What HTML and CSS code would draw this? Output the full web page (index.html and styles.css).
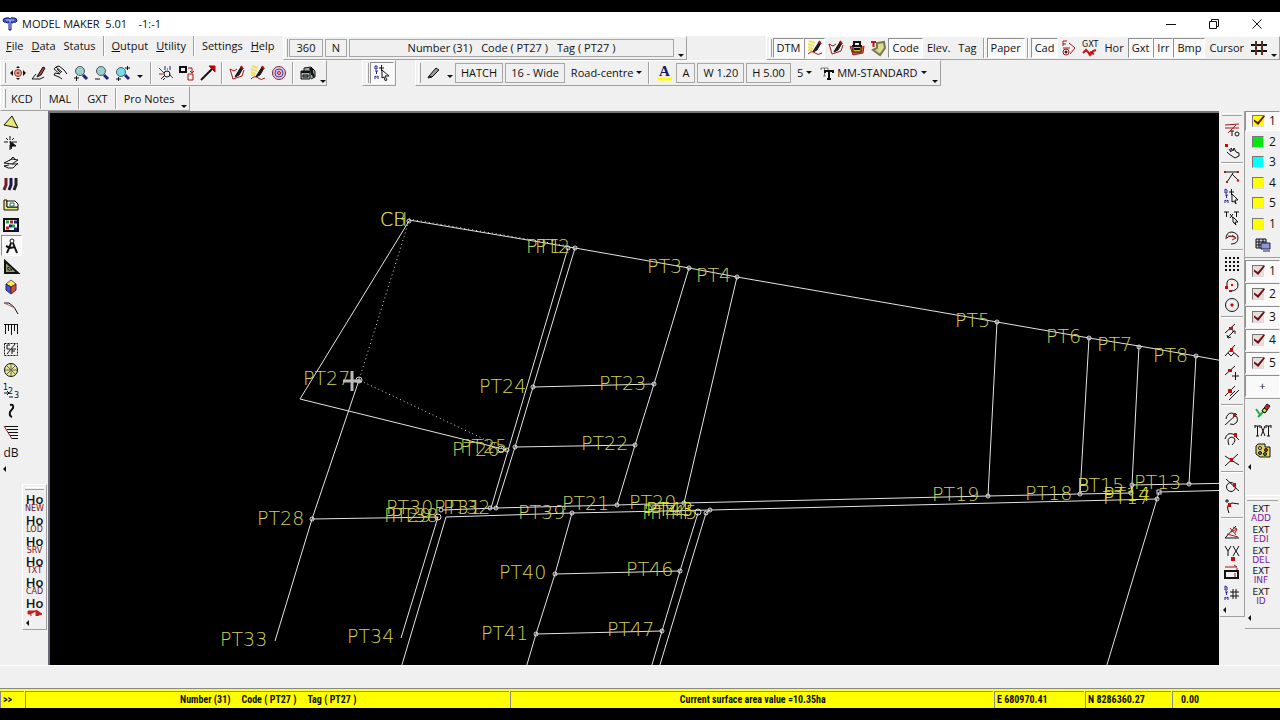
FILE: index.html
```html
<!DOCTYPE html>
<html lang="en">
<head>
<meta charset="utf-8">
<title>MODEL MAKER 5.01</title>
<link rel="stylesheet" href="styles.css">
</head>
<body>
<div class="app">
  <header class="titlebar">
    <svg class="logo" viewBox="0 0 16 16"><path d="M1 5Q1 2 4 2Q7 1 8 3Q9 1 12 2Q15 2 15 5Q14 7 12 6Q10 8 9 6V14H7V6Q5 8 4 6Q2 7 1 5Z" fill="#4a58c8" stroke="#101878"/><path d="M4 4H12M8 4V13" stroke="#a8c0ff"/></svg>
    <h1>MODEL MAKER&nbsp; 5.01 &nbsp;&nbsp; -1:-1</h1>
    <div class="winbtns">
      <button aria-label="Minimize"><svg viewBox="0 0 12 12"><path d="M1 6.500H11"/></svg></button>
      <button aria-label="Restore"><svg viewBox="0 0 12 12"><path d="M1.500 3.500H8.500V10.500H1.500ZM3.500 3V1.500H10.500V8.500H9"/></svg></button>
      <button aria-label="Close"><svg viewBox="0 0 12 12"><path d="M1.500 1.500L10.500 10.500M10.500 1.500L1.500 10.500"/></svg></button>
    </div>
  </header>

  <div class="row row1">
    <nav class="menu">
      <button><u>F</u>ile</button><button><u>D</u>ata</button><button>Status</button><i class="sep"></i>
      <button><u>O</u>utput</button><button><u>U</u>tility</button><i class="sep"></i>
      <button>Settings</button><button><u>H</u>elp</button>
    </nav>
    <div class="bar info">
      <i class="grip"></i>
      <button class="box w34">360</button><button class="box w22">N</button>
      <div class="box readout"><span>Number (31)</span><span>Code ( PT27 )</span><span>Tag ( PT27 )</span></div>
      <button class="more" aria-label="More"></button>
    </div>
    <div class="bar toggles">
      <i class="grip"></i>
      <button class="on">DTM</button>
      <button class="ic on" aria-label="Yellow pen"><svg viewBox="0 0 16 16"><path d="M2 1L8 3M1 4L7 6M1 7L6 9M1 10H5" stroke="#f0e060" stroke-width="2"/><path d="M1 14Q5 10 8 13T15 13" class="r"/><path d="M7 10L12 2L14 3L10 10L6 12Z" fill="#222"/><path d="M12 1L14 4" class="r2"/></svg></button>
      <button class="ic" aria-label="Red pen"><svg viewBox="0 0 16 16"><path d="M1 4L5 6L8 4M1 4L4 14L13 11L15 5" class="r"/><path d="M7 10L12 2L14 3L10 10L6 12Z" fill="#222"/><path d="M12 1L14 4" class="r2"/></svg></button>
      <button class="ic" aria-label="Survey layer"><svg viewBox="0 0 16 16"><path d="M1 6L4 15L14 13L15 6" fill="#d86040" class="r"/><path d="M4 6H12V12H4Z" fill="#d8b840"/><path d="M5 5V2H11V5M3 6H13M5 9H11" stroke-width="2"/></svg></button>
      <button class="ic" aria-label="Text area"><svg viewBox="0 0 16 16"><path d="M7 3L14 2L15 8L10 15L3 10L7 8Z" fill="#d8dc90" stroke="#777850" stroke-width="2"/><path d="M1 2H6M3.500 2V7" class="r2"/></svg></button>
      <button class="on">Code</button><button>Elev.</button><button>Tag</button><i class="sep"></i>
      <button class="on">Paper</button><i class="sep"></i>
      <button class="on">Cad</button>
      <button class="ic" aria-label="Snap"><svg viewBox="0 0 16 16"><path d="M2 1H6M2 1V6M2 4H5M8 3L14 8L9 14M2 8H9" class="r"/><circle cx="5" cy="12" r="3" class="r"/><circle cx="5" cy="12" r="1" fill="#700"/></svg></button>
      <button class="ic" aria-label="GXT"><svg viewBox="0 0 16 16"><text x="0" y="7" class="tiny">GXT</text><path d="M1 13L4 10L6 12L8 15L11 11L14 10M8 12L12 14" class="r2"/></svg></button>
      <button>Hor</button><button class="on">Gxt</button><button class="on">Irr</button><button class="on">Bmp</button><button>Cursor</button>
      <button class="ic" aria-label="Grid"><svg viewBox="0 0 16 16"><path d="M0 5H16M0 11H16" stroke-width="2"/><path d="M5 1V15M11 1V15" stroke="#5c3020" stroke-width="2"/></svg></button>
      <button class="more" aria-label="More"></button>
    </div>
  </div>

  <div class="row row2">
    <div class="bar tools">
      <i class="grip"></i>
      <button class="ic" aria-label="Fit"><svg viewBox="0 0 16 16"><circle cx="8" cy="8" r="3.500" fill="#e8b0a0" stroke="#902820"/><circle cx="8" cy="8" r="1" stroke="#902820"/><path d="M0 8L3 5V11ZM16 8L13 5V11ZM8 1L6 3H10ZM8 15L6 13H10Z" fill="#111" stroke="none"/></svg></button>
      <button class="ic" aria-label="Draw"><svg viewBox="0 0 16 16"><path d="M1 14H9L13 12M1 14L5 9"/><path d="M7 10L12 2L14 3L10 10L6 12Z" fill="#b04038"/></svg></button>
      <button class="ic" aria-label="Pan"><svg viewBox="0 0 16 16"><path d="M2 4L4 2L10 7M4 2L7 1L12 5L15 9M2 4L8 9L3 8L2 10L7 12L10 14M5 4L9 8"/></svg></button>
      <button class="ic" aria-label="Zoom in"><svg viewBox="0 0 16 16"><circle cx="7" cy="6" r="4.500" fill="#98d0d0" stroke="#555"/><path d="M10 10L14 14" stroke="#202080" stroke-width="3"/><path d="M1 13H6M3.500 11V16"/></svg></button>
      <button class="ic" aria-label="Zoom out"><svg viewBox="0 0 16 16"><circle cx="7" cy="6" r="4.500" fill="#98d0d0" stroke="#555"/><path d="M10 10L14 14" stroke="#202080" stroke-width="3"/><path d="M1 14H6"/></svg></button>
      <button class="ic" aria-label="Zoom window"><svg viewBox="0 0 16 16"><circle cx="6" cy="7" r="4.500" fill="#70e0e8" stroke="#555"/><path d="M10 10L14 14" stroke="#202080" stroke-width="3"/><path d="M1 14H6M3.500 12V16M10 3H15M12.500 1V5"/></svg></button>
      <button class="drop wide" aria-label="Zoom options"></button><i class="sep"></i>
      <button class="ic" aria-label="Zoom scale"><svg viewBox="0 0 16 16"><path d="M1 3L6 8M1 9H5M11 9L15 13" class="r"/><path d="M7 1V5M9 4H10M12 1V5" stroke="#202080"/><circle cx="9" cy="9" r="3"/><path d="M6 11L3 14M7 13L5 15"/></svg></button>
      <button class="ic" aria-label="Copy"><svg viewBox="0 0 16 16"><path d="M1 2H7V7H1Z" stroke-width="2"/><path d="M9 9H14V15H9ZM9 3H13V8M11 6L13 8L15 6" class="r"/></svg></button>
      <button class="ic" aria-label="Line"><svg viewBox="0 0 16 16"><path d="M1 15L12 4" stroke-width="2"/><path d="M9 1H15V7Z" fill="#b00" stroke="#b00"/></svg></button><i class="sep"></i>
      <button class="ic" aria-label="Red pen"><svg viewBox="0 0 16 16"><path d="M1 4L5 6L8 4M1 4L4 14L13 11L15 5" class="r"/><path d="M7 10L12 2L14 3L10 10L6 12Z" fill="#222"/><path d="M12 1L14 4" class="r2"/></svg></button>
      <button class="ic" aria-label="Yellow pen"><svg viewBox="0 0 16 16"><path d="M2 1L8 3M1 4L7 6M1 7L6 9M1 10H5" stroke="#f0e060" stroke-width="2"/><path d="M1 14Q5 10 8 13T15 13" class="r"/><path d="M7 10L12 2L14 3L10 10L6 12Z" fill="#222"/><path d="M12 1L14 4" class="r2"/></svg></button>
      <button class="ic" aria-label="Target"><svg viewBox="0 0 16 16"><circle cx="8" cy="8" r="6.500" fill="#e8c8e0" stroke="#702848"/><circle cx="8" cy="8" r="4" stroke="#3838a0"/><circle cx="8" cy="8" r="1.500" class="r"/></svg></button><i class="sep"></i>
      <button class="ic" aria-label="Camera"><svg viewBox="0 0 16 16"><path d="M1 6H10V14H1ZM4 6V3L11 2L15 6V12L11 14" fill="#aaa"/><path d="M1 7H10M10 3L14 12M12 3V10" stroke-width="2"/><path d="M3 10H8V12H3Z" fill="#6ab"/></svg></button>
      <button class="more" aria-label="More"></button>
    </div>
    <div class="bar dtm">
      <i class="grip"></i>
      <button class="ic on" aria-label="DTM select"><svg viewBox="0 0 16 16"><path d="M1 1V4H3V1ZM1 6H4M2.500 6V9M1 14V11L2.500 12L4 11V14" stroke="#2020a0"/><path d="M5 3H10M7.500 0V6M8 5L15 11H11L13 15L11 15.500L10 12L8 13Z" fill="#fff"/></svg></button>
    </div>
    <div class="bar style">
      <i class="grip"></i>
      <button class="ic w34" aria-label="Pen"><svg viewBox="0 0 16 16"><path d="M3 11L10 3L13 5L6 12ZM3 11L2 13L6 12" fill="#999"/></svg></button>
      <button class="drop" aria-label="Pen options"></button>
      <button class="box">HATCH</button><button class="box">16 - Wide</button>
      <button class="dd">Road-centre<b class="drop"></b></button><i class="sep"></i>
      <button class="ic w34" aria-label="Text colour"><svg viewBox="0 0 16 16"><path d="M1 14H15" stroke="#ff0" stroke-width="3"/><text x="2" y="11" class="serif">A</text></svg></button>
      <button class="box">A</button><button class="box">W 1.20</button><button class="box">H 5.00</button>
      <button class="dd">5<b class="drop"></b></button>
      <button class="dd"><svg viewBox="0 0 16 16"><path d="M2 5V3H9V5M5.500 3V11M4 11H7" stroke="#777"/><path d="M6 8V6H14V8M10 6V14M8 14H12" stroke-width="2"/></svg>MM-STANDARD<b class="drop"></b></button>
      <button class="more" aria-label="More"></button>
    </div>
  </div>

  <div class="row row3">
    <div class="bar notes"><i class="grip"></i><button>KCD</button><i class="sep"></i><button>MAL</button><i class="sep"></i><button>GXT</button><i class="sep"></i><button>Pro Notes</button><button class="more" aria-label="More"></button></div>
  </div>

  <main class="work">
    <aside class="side left">
      <button class="ic" aria-label="Triangle"><svg viewBox="0 0 16 16"><path d="M9 2L15 14L1 11Z" fill="#e8e878"/></svg></button>
      <button class="ic" aria-label="Point"><svg viewBox="0 0 16 16"><path d="M7 1V5M7 10V15M1 7H5M9 7H14M3 3L5 5M11 3L9 5"/><path d="M7 6L13 11L9 11L8 14Z" fill="#111"/></svg></button>
      <button class="ic" aria-label="Surfaces"><svg viewBox="0 0 16 16"><path d="M1 8L9 4L15 5L9 9ZM1 11Q5 14 10 13L15 8M1 11L6 10M6 6L10 2L13 5M9 9L15 9"/></svg></button>
      <button class="ic" aria-label="Pens"><svg viewBox="0 0 16 16"><path d="M3 2V9L1 14" stroke="#702020" stroke-width="3"/><path d="M8 2V9L6 14" stroke="#181858" stroke-width="3"/><path d="M13 2V9L11 14" stroke="#222" stroke-width="3"/></svg></button>
      <button class="ic" aria-label="Sheet"><svg viewBox="0 0 16 16"><path d="M1 3V13H15V10H4V3Z" fill="#e8e878"/><path d="M4 4H12L15 7V10H4Z" fill="#fff"/><path d="M7 6H11V9H7Z" stroke="#187838"/></svg></button>
      <button class="ic" aria-label="Palette grid"><svg viewBox="0 0 16 16"><path d="M1 2H15V14H1Z" fill="#fff" stroke-width="2"/><path d="M3 5H6M9 9H12" stroke="#20a040" stroke-width="3"/><path d="M7 5H10M3 11H6" stroke="#b02020" stroke-width="3"/><path d="M11 5H14M6 9H9M11 12H14" stroke="#202080" stroke-width="3"/></svg></button>
      <button class="ic on" aria-label="Compass"><svg viewBox="0 0 16 16"><circle cx="9" cy="3" r="2"/><path d="M8 5L4 15M10 5L14 15M3 8L7 10L12 9" stroke-width="2"/></svg></button>
      <button class="ic" aria-label="Set square"><svg viewBox="0 0 16 16"><path d="M2 2V14H15Z" fill="#999970" stroke-width="2"/><path d="M5 8V11H9Z" fill="#eee"/></svg></button>
      <button class="ic" aria-label="Solid"><svg viewBox="0 0 16 16"><path d="M8 1L13 5L8 8L3 5Z" fill="#ffe840" stroke="#665"/><path d="M3 5L8 8V15L3 11Z" fill="#4050d0" stroke="#226"/><path d="M13 5L8 8V15L13 11Z" fill="#d05038" stroke="#622"/></svg></button>
      <button class="ic" aria-label="Curve"><svg viewBox="0 0 16 16"><path d="M1 3H6L11 7L15 14"/><path d="M1 3L12 8" stroke="#a66"/></svg></button>
      <button class="ic" aria-label="Profile"><svg viewBox="0 0 16 16"><path d="M1 3.500H15M2.500 3V13M5.500 3V10M8.500 3V14M11.500 3V10M14.500 3V13"/></svg></button>
      <button class="ic" aria-label="Cut and fill"><svg viewBox="0 0 16 16"><path d="M1.500 2.500H14.500V14.500H1.500Z" stroke-dasharray="2 1"/><path d="M12 3L4 13M7 4H4V8H7M13 8H9V13M9 10H12"/></svg></button>
      <button class="ic" aria-label="Wheel"><svg viewBox="0 0 16 16"><circle cx="8" cy="8" r="6.500" fill="#e8e898"/><path d="M8 2V14M2 8H14M4 4L12 12M12 4L4 12" stroke="#665"/></svg></button>
      <button class="ic" aria-label="Renumber"><svg viewBox="0 0 16 16"><text x="0" y="7" class="tiny">1</text><text x="5" y="11" class="tiny">2</text><text x="11" y="15" class="tiny">3</text><path d="M1 10H5M4 8L6 10L4 12M6 14H10"/></svg></button>
      <button class="ic" aria-label="Spline"><svg viewBox="0 0 16 16"><path d="M7 2Q11 1 10 5L7 9Q6 13 9 14" stroke-width="2"/></svg></button>
      <button class="ic" aria-label="Section"><svg viewBox="0 0 16 16"><path d="M2 2.500H15M4 5.500H15M5 8.500H15M7 11.500H15M9 14.500H15"/><path d="M1 2L9 15" class="r"/></svg></button>
      <button class="ic">dB</button>
      <button class="back" aria-label="More"></button>
    </aside>
    <aside class="hobar">
      <i class="hgrip"></i>
      <button>Ho<small>NEW</small></button><button>Ho<small>LOD</small></button><button>Ho<small>SRV</small></button><button>Ho<small>TXT</small></button><button>Ho<small>CAD</small></button>
      <button aria-label="Ho exchange">Ho<svg viewBox="0 0 16 6"><path d="M4 4H1V1H10M4 4V6M9 0L15 4L9 6Z" fill="#b22" stroke="#b22"/></svg></button>
      <button class="back" aria-label="More"></button>
    </aside>

    <section class="canvas" aria-label="Drawing">
      <svg>
        <g transform="translate(-50 -113)">
          <g class="lines">
            <path d="M409 220L575 248L689 268L737 277L997 322L1089 338L1139 346L1196 356L1240 364"/>
            <path d="M409 221L300 399L507 450"/>
            <path d="M359 380L312 519L275 641"/>
            <path d="M568 248L491 508M575 248L533 387L515 447L496 508"/>
            <path d="M533 387L654 384M515 447L635 445"/>
            <path d="M689 268L654 384L635 445L617 505M737 277L684 503"/>
            <path d="M997 322L988 496M1089 338L1080 494M1139 346L1132 485L1131 493M1196 356L1189 484"/>
            <path d="M443 510L496 508L617 505L684 503L988 496L1080 494L1131 493M1132 485L1240 483"/>
            <path d="M312 519L438 517M446 517L572 513L710 510L1157 499L1159 492L1240 490"/>
            <path d="M438 517L401 638M446 517L401 668"/>
            <path d="M572 513L555 574L536 634L526 668M555 574L680 571M536 634L662 631"/>
            <path d="M698 513L680 571L662 631L651 668M710 510L706 513L659 668M1157 499L1106 668"/>
            <path d="M409 221L359 380L507 450M409 219L568 246" class="dots"/>
          </g>
          <g class="marks">
            <circle cx="409" cy="221" r="2"/><circle cx="568" cy="248" r="2"/><circle cx="575" cy="248" r="2"/><circle cx="689" cy="268" r="2"/><circle cx="737" cy="277" r="2"/><circle cx="997" cy="322" r="2"/><circle cx="1089" cy="338" r="2"/><circle cx="1139" cy="347" r="2"/><circle cx="1196" cy="356" r="2"/>
            <circle cx="533" cy="387" r="2"/><circle cx="654" cy="384" r="2"/><circle cx="515" cy="447" r="2"/><circle cx="635" cy="445" r="2"/><circle cx="507" cy="450" r="2"/><circle cx="501" cy="449" r="3"/><circle cx="359" cy="380" r="3"/><circle cx="359" cy="380" r="1"/>
            <circle cx="312" cy="519" r="2"/><circle cx="438" cy="517" r="3"/><circle cx="441" cy="510" r="2"/><circle cx="490" cy="508" r="2"/><circle cx="496" cy="508" r="2"/><circle cx="617" cy="505" r="2"/><circle cx="684" cy="503" r="2"/><circle cx="572" cy="513" r="2"/><circle cx="698" cy="512" r="3"/><circle cx="706" cy="513" r="2"/><circle cx="710" cy="510" r="2"/>
            <circle cx="555" cy="574" r="2"/><circle cx="680" cy="571" r="2"/><circle cx="536" cy="634" r="2"/><circle cx="662" cy="631" r="2"/>
            <circle cx="988" cy="496" r="2"/><circle cx="1080" cy="494" r="2"/><circle cx="1132" cy="485" r="2"/><circle cx="1131" cy="493" r="2"/><circle cx="1189" cy="484" r="2"/><circle cx="1157" cy="499" r="2"/><rect x="1157" y="490" width="4" height="4"/>
          </g>
          <g class="labels">
            <text x="380" y="226">CB</text><text x="380" y="226">CH</text><text x="526" y="253">PT1</text><text x="535" y="253">PT2</text>
            <text x="647" y="273">PT3</text><text x="696" y="282">PT4</text><text x="955" y="327">PT5</text><text x="1046" y="343">PT6</text><text x="1097" y="351">PT7</text><text x="1153" y="362">PT8</text>
            <text x="303" y="385">PT27</text><text x="479" y="393">PT24</text><text x="599" y="390">PT23</text><text x="581" y="450">PT22</text><text x="460" y="453">PT25</text><text x="452" y="456">PT26</text>
            <text x="257" y="525">PT28</text><text x="386" y="514">PT30</text><text x="384" y="522">PT29</text><text x="391" y="522">PT38</text><text x="434" y="514">PT31</text><text x="443" y="514">PT32</text>
            <text x="518" y="519">PT39</text><text x="562" y="510">PT21</text><text x="629" y="509">PT20</text><text x="642" y="519">PT44</text><text x="646" y="516" class="hot">PT43</text><text x="650" y="519">PT45</text>
            <text x="932" y="501">PT19</text><text x="1025" y="500">PT18</text><text x="1077" y="492">PT15</text><text x="1077" y="492">B</text><text x="1134" y="489">PT13</text><text x="1103" y="501" class="hot">PT14</text><text x="1103" y="504">PT17</text>
            <text x="499" y="579">PT40</text><text x="626" y="576">PT46</text><text x="481" y="640">PT41</text><text x="607" y="636">PT47</text><text x="220" y="646">PT33</text><text x="347" y="643">PT34</text>
          </g>
          <path class="cursor" d="M352 371V391M343 381H361"/>
        </g>
      </svg>
    </section>

    <aside class="side snaps">
      <i class="hgrip"></i>
      <button class="ic" aria-label="Snap to"><svg viewBox="0 0 16 16"><path d="M1 3L15 2M1 6H15M12 3L4 11" class="r"/><path d="M6 9H10M8 9V14"/><circle cx="13" cy="12" r="2"/></svg></button>
      <button class="ic" aria-label="Snap drag"><svg viewBox="0 0 16 16"><path d="M5 6L7 9L7 5L9 8L10 5L12 9L15 10V13L11 15L5 11L3 9"/><path d="M1 1H4V4H1Z" fill="#d00" stroke="none"/></svg></button>
      <i class="hsep"></i>
      <button class="ic" aria-label="End point"><svg viewBox="0 0 16 16"><path d="M1 4H14M9 5L3 14M8 6L14 12"/><path d="M1 3V5M14 3V5M3 13V15M13 12L15 13" class="r2"/></svg></button>
      <button class="ic" aria-label="DTM pick"><svg viewBox="0 0 16 16"><path d="M1 0V4H3V1ZM1 6H4M2.500 6V9M1 14V11L2.500 12L4 11V14" stroke="#2020a0"/><path d="M5 3H10M7.500 0V6M8 5L14 11H11L12 15L10 12L8 13Z" fill="#fff"/></svg></button>
      <button class="ic" aria-label="Text pick"><svg viewBox="0 0 16 16"><path d="M0 2H5M2.500 2V7M6 4L9 8M9 4L6 8M10 2H15M12.500 2V7M9 7L14 12H11L12 15L9 12Z"/></svg></button>
      <button class="ic" aria-label="Arc pick"><svg viewBox="0 0 16 16"><path d="M2 9Q2 2 8 2Q14 3 14 8Q14 14 7 14M3 8Q5 5 11 7"/><path d="M4 6L11 7M8 5L12 8L8 10" class="r"/></svg></button>
      <i class="hsep"></i>
      <button class="ic" aria-label="Grid snap"><svg viewBox="0 0 16 16"><path d="M1 2H15M1 6H15M1 10H15M1 14H15" stroke-width="2" stroke-dasharray="2 2"/></svg></button>
      <button class="ic" aria-label="Arc end"><svg viewBox="0 0 16 16"><path d="M3 9Q2 2 8 2Q14 3 14 8Q14 14 6 14"/><path d="M1 9H4V12H1ZM5 13H8V15H5ZM7 7H9V9H7Z" fill="#d00" stroke="none"/></svg></button>
      <button class="ic" aria-label="Centre"><svg viewBox="0 0 16 16"><circle cx="8" cy="8" r="6.500"/><path d="M7 7H9V9H7Z" fill="#d00" stroke="#d00"/></svg></button>
      <i class="hsep"></i>
      <button class="ic" aria-label="Along"><svg viewBox="0 0 16 16"><path d="M1 10L11 1M4 14L10 8M3 12L4 15L7 14M8 8H11V11"/><path d="M6 5H8V6H6Z" class="r2"/></svg></button>
      <button class="ic" aria-label="Mid point"><svg viewBox="0 0 16 16"><path d="M1 12L11 1M7 6L15 13M4 9L7 12L10 9"/><path d="M7 5H8V7H7Z" class="r2"/></svg></button>
      <button class="ic" aria-label="Add point"><svg viewBox="0 0 16 16"><path d="M1 11L11 2M8 12H15M11.500 8V16"/><path d="M5 6H7V7H5Z" class="r2"/></svg></button>
      <button class="ic" aria-label="Parallel"><svg viewBox="0 0 16 16"><path d="M1 11L11 1M5 15L15 5M6 11L11 6"/><path d="M5 5H7V7H5Z" class="r2"/></svg></button>
      <i class="hsep"></i>
      <button class="ic" aria-label="Tangent"><svg viewBox="0 0 16 16"><path d="M1 14L13 3M2 8Q3 2 8 2Q15 5 13 11Q10 15 6 13"/><path d="M10 3H11V5H10Z" class="r2"/></svg></button>
      <button class="ic" aria-label="Arc tangent"><svg viewBox="0 0 16 16"><path d="M1 8Q3 1 9 3L15 9M5 14Q2 7 8 6Q14 8 8 14"/><path d="M11 3H12V5H11Z" class="r2"/></svg></button>
      <button class="ic" aria-label="Intersection"><svg viewBox="0 0 16 16"><path d="M1 14L14 2M1 4L15 13"/><path d="M7 7H8V9H7Z" class="r2"/></svg></button>
      <i class="hsep"></i>
      <button class="ic" aria-label="Circle tangent"><svg viewBox="0 0 16 16"><circle cx="7" cy="9" r="4.500"/><path d="M2 1L15 13"/><path d="M10 6H11V8H10Z" class="r2"/></svg></button>
      <button class="ic" aria-label="Arc node"><svg viewBox="0 0 16 16"><path d="M5 15Q1 6 8 5L15 6M1 3H5M3 1V5"/><path d="M5 6H6V8H5Z" class="r2"/></svg></button>
      <i class="hsep"></i>
      <button class="ic" aria-label="Angle"><svg viewBox="0 0 16 16"><path d="M1 14H15M1 14L12 2"/><path d="M3 10L14 13M6 4L12 11M7 8L13 5M9 3L13 5L11 9" class="r"/></svg></button>
      <button class="ic" aria-label="Coordinates"><svg viewBox="0 0 16 16"><path d="M1 1L4 6L7 1M4 6V11M9 1L15 11M15 1L9 11"/><path d="M8 13H10V15H8Z" class="r2"/></svg></button>
      <button class="ic" aria-label="Offset"><svg viewBox="0 0 16 16"><path d="M1 6H14V13H1Z" stroke-width="2"/><path d="M1 2H13L10 0M13 3V5M11 12V8" class="r"/></svg></button>
      <button class="ic" aria-label="DTM grid"><svg viewBox="0 0 16 16"><path d="M1 0V4H3V1ZM1 6H4M2.500 6V9M1 14V11L2.500 12L4 11V14" stroke="#2020a0"/><path d="M6 6H15M6 10H15M9 3V13M12 3V13"/></svg></button>
      <button class="back" aria-label="More"></button>
    </aside>

    <aside class="layers">
      <div class="colours">
        <label class="on"><input type="checkbox" class="yellow" checked>1</label>
        <label><input type="checkbox" class="green">2</label>
        <label><input type="checkbox" class="cyan">3</label>
        <label><input type="checkbox" class="yellow">4</label>
        <label><input type="checkbox" class="yellow">5</label>
        <label><input type="checkbox" class="yellow">1</label>
        <button class="ic" aria-label="Layer manager"><svg viewBox="0 0 16 16"><path d="M1 2H11V11H1Z" fill="#ccd"/><path d="M1 5H11M1 8H11M4 2V11M8 2V11"/><path d="M6 6H15V12H6ZM8 14H15" fill="#89c" stroke="#202050"/></svg></button>
      </div>
      <div class="views">
        <label class="on"><input type="checkbox" checked>1</label>
        <label class="on"><input type="checkbox" checked>2</label>
        <label class="on"><input type="checkbox" checked>3</label>
        <label class="on"><input type="checkbox" checked>4</label>
        <label class="on"><input type="checkbox" checked>5</label>
        <button class="on">+</button>
      </div>
      <div class="edits">
        <button class="ic" aria-label="Erase"><svg viewBox="0 0 16 16"><path d="M1 7L6 14M3 15L9 9" stroke="#20b040" stroke-width="2"/><path d="M7 9L12 2L15 4L10 11Z" fill="#c03020"/><path d="M7 9L10 11L12 8L9 6Z" fill="#e8e040"/></svg></button>
        <button class="ic" aria-label="Text style"><svg viewBox="0 0 16 16"><path d="M0 3H5M2.500 3V13M1 13H4M6 3L10 13M10 3L6 13M11 3H16M13.500 3V13M12 13H15"/><path d="M0 2V5M5 2V5M11 2V5M16 2V5"/></svg></button>
        <button class="ic" aria-label="Palette"><svg viewBox="0 0 16 16"><path d="M3 1H10V4H15V14H5L1 11V3Z" fill="#e0d060"/><circle cx="5" cy="5" r="1.500" fill="#fff"/><circle cx="11" cy="7" r="1.500" fill="#c33"/><circle cx="5" cy="10" r="1.500" fill="#38a"/><circle cx="10" cy="11" r="1.500" fill="#3a4"/></svg></button>
        <button class="back" aria-label="More"></button>
      </div>
      <div class="ext">
        <i class="hgrip"></i>
        <button>EXT<small>ADD</small></button><button>EXT<small>EDI</small></button><button>EXT<small>DEL</small></button><button>EXT<small>INF</small></button><button>EXT<small>ID</small></button>
        <button class="back" aria-label="More"></button>
      </div>
    </aside>
  </main>

  <div class="strip"></div>
  <footer class="status">
    <div class="prompt">&gt;&gt;</div>
    <div class="mid"><span>Number (31)</span><span>Code ( PT27 )</span><span>Tag ( PT27 )</span></div>
    <div class="mid">Current surface area value =10.35ha</div>
    <div>E 680970.41</div>
    <div>N 8286360.27</div>
    <div class="elev">0.00</div>
  </footer>
</div>
</body>
</html>
```

FILE: styles.css
```css
* { box-sizing: border-box; }
html, body { height: 100%; margin: 0; }
body { background: #000; font: 11px/16px "Open Sans", "Noto Sans", sans-serif; color: #111; }
button { font: inherit; color: inherit; background: none; border: 1px solid transparent; padding: 0 4px; margin: 0; white-space: nowrap; }
.app { display: flex; flex-direction: column; height: 100vh; padding: 12px 0; overflow: hidden; }
.titlebar, .row, .strip, .status { flex: none; }

.titlebar { display: flex; align-items: center; height: 24px; background: #fff; padding: 0 2px; }
.titlebar h1 { font-size: 11px; font-weight: 400; margin: 0 auto 0 4px; }
.logo { width: 16px; height: 16px; }
.winbtns { display: flex; }
.winbtns button { width: 43px; height: 22px; padding: 0; }
.winbtns svg { width: 12px; height: 12px; fill: none; stroke: #111; display: block; margin: auto; }

.row { display: flex; background: #f0f0f0; }
.row1 { height: 24px; }
.row2 { height: 26px; }
.row3 { height: 25px; }
.menu { display: flex; align-items: center; height: 20px; padding-left: 2px; width: 283px; flex: none; }
.menu button { padding: 0 3px; }
.menu .sep { margin: 0 3px; }
.bar { display: flex; align-items: center; border: 1px solid #fff; border-right-color: #a0a0a0; border-bottom-color: #a0a0a0; padding-left: 3px; }
.info { padding-left: 1px; }
.grip { width: 3px; align-self: stretch; margin: 2px 1px 2px 0; border-left: 1px solid #fff; border-right: 1px solid #a0a0a0; flex: none; }
.sep { width: 2px; align-self: stretch; margin: 1px 3px; border-left: 1px solid #a0a0a0; border-right: 1px solid #fff; flex: none; }
.box { border: 1px solid #a6a6a6; height: 20px; margin-right: 2px; display: flex; align-items: center; justify-content: center; padding: 0 5px; }
.row1 .box { height: 18px; }
.w34 { width: 34px; }
.w22 { width: 22px; padding: 0; }
.readout { width: 325px; gap: 9px; }
.on { background: #f9f9f9; border-color: #909090 #fff #fff #909090; }
.more, .drop { position: relative; width: 10px; height: 16px; padding: 0; flex: none; }
.more { align-self: flex-end; }
.more::after, .drop::after { content: ""; display: block; width: 0; margin: 8px auto 0; border: 3px solid transparent; border-top-color: #111; border-bottom: 0; }
.drop::after { margin-top: 6px; }
.drop.wide { width: 14px; }
.ic { width: 21px; height: 21px; padding: 0; flex: none; display: flex; align-items: center; justify-content: center; }
.ic svg, .dd svg { width: 16px; height: 16px; fill: none; stroke: #111; display: block; overflow: visible; flex: none; }
.ic.w34 { width: 23px; }
.r { stroke: #a01818; }
.r2 { stroke: #c01010; stroke-width: 2; }
.tiny { font: 8px "DejaVu Sans", sans-serif; fill: #111; stroke: none; }
.serif { font: bold 15px "Liberation Serif", serif; fill: #181860; stroke: none; }
.toggles { margin-left: auto; padding-left: 2px; }
.toggles button:not(.ic):not(.more) { height: 20px; padding: 0 3px; }
.toggles .sep { margin: 1px 2px; }
.tools { width: 327px; padding-left: 2px; }
.tools .sep { margin: 1px 3px; }
.dtm { margin-left: 35px; width: 34px; }
.dtm .ic { width: 24px; height: 22px; }
.style { margin-left: 19px; padding-left: 2px; }
.dd { display: flex; align-items: center; padding: 0 0 0 3px; }
.dd .drop { margin-left: 1px; }
.dd svg { margin-right: 2px; }
.notes { padding-left: 2px; }
.notes button { padding: 0 3px; }
.notes .more { padding: 0; }

.work { flex: 1; display: flex; min-height: 0; background: #f0f0f0; }
.side { display: flex; flex-direction: column; align-items: center; }
.side .ic:nth-of-type(3n) { height: 20px; }
.left { width: 22px; }
.left .ic { font-size: 12px; }
.hobar { width: 25px; align-self: flex-start; margin-top: 373px; display: flex; flex-direction: column; align-items: center; border: 1px solid #fff; border-right-color: #a0a0a0; border-bottom-color: #a0a0a0; }
.hobar button { width: 22px; height: 21px; padding: 0; margin: 0; line-height: 11px; font-size: 13px; font-weight: 600; display: flex; flex-direction: column; align-items: center; }
.hobar button:nth-of-type(3n) { height: 20px; }
.hobar small, .ext small { font: 8px/8px "DejaVu Sans", sans-serif; color: #701020; }
.hobar svg { width: 16px; height: 6px; margin-top: 1px; flex: none; }
.hgrip { align-self: stretch; height: 3px; margin: 2px 2px 3px; border-top: 1px solid #fff; border-bottom: 1px solid #a0a0a0; flex: none; }
.back { width: 14px; height: 12px; padding: 0; align-self: flex-start; }
.back::after { content: ""; display: block; width: 0; margin-left: 2px; border: 3px solid transparent; border-right-color: #111; border-left: 0; }
.hobar .back, .ext .back { width: 14px; height: 12px; display: block; }

.canvas { flex: 1; min-width: 0; background: #000; border-top: 2px solid #777; border-left: 2px solid #667; margin-left: 1px; }
.canvas > svg { display: block; width: 100%; height: 100%; }
.lines { fill: none; stroke: #e4e4e4; }
.dots { stroke: #ddd; stroke-dasharray: 1 3; }
.marks { fill: none; stroke: #ddd; }
.labels { font: 200 19px "DejaVu Sans", "DejaVu Sans Light", sans-serif; fill: #d0d058; }
.hot { fill: #f0f020; }
.cursor { stroke: #bbb; stroke-width: 3; }

.snaps { width: 25px; margin-left: 1px; border-right: 1px solid #a0a0a0; align-self: flex-start; border-bottom: 1px solid #a0a0a0; }
.hsep { align-self: stretch; height: 2px; margin: 1px 1px 2px; border-top: 1px solid #a0a0a0; border-bottom: 1px solid #fff; flex: none; }
.layers { width: 35px; display: flex; flex-direction: column; }
.layers label { display: flex; align-items: center; gap: 5px; border: 1px solid transparent; padding-left: 6px; font-size: 12px; }
.layers label.on { border-color: #909090 #fff #fff #909090; }
.colours { height: 147px; border-bottom: 1px solid #a0a0a0; }
.colours label { height: 20px; }
.colours label:nth-child(2n) { height: 21px; }
.colours .ic, .edits .ic { margin: 0 auto; }
.views label, .views > button { height: 22px; margin-bottom: 1px; }
.views > button { display: block; width: 100%; }
.views { padding-top: 2px; border-bottom: 1px solid #a0a0a0; }
.edits { height: 96px; flex: none; }
.edits .ic:nth-child(3n) { height: 20px; }
.edits .back { display: block; }
.layers input { appearance: none; position: relative; width: 12px; height: 12px; margin: 0; border: 1px solid #888; border-color: #777 #ddd #ddd #777; background: #e8dcdc; }
.layers input.yellow { background: #ff0; }
.layers input.green { background: #00e810; }
.layers input.cyan { background: #0ff; }
.layers input:checked::after { content: ""; position: absolute; left: 1px; top: -1px; width: 11px; height: 10px; background: #681010; clip-path: polygon(0 45%, 35% 70%, 90% 0, 100% 12%, 38% 100%, 0 65%); }
.ext { border-top: 1px solid #fff; border-bottom: 1px solid #a0a0a0; }
.ext .hgrip { display: block; }
.ext button { width: 32px; height: 21px; padding: 0; font: 9px/9px "DejaVu Sans", sans-serif; display: flex; flex-direction: column; align-items: center; }
.ext button:nth-of-type(3n) { height: 20px; }
.ext small { font-size: 9px; line-height: 9px; color: #8020a0; }

.strip { height: 23px; background: #f0f0f0; border-top: 1px solid #fff; }
.status { display: grid; grid-template-columns: 24px 1fr 1fr 90px 86px 108px; gap: 1px; height: 20px; padding-top: 2px; background: #ffff20; border-top: 1px solid #888; font: bold 10px/15px "Roboto Condensed", "Liberation Sans Narrow", "Liberation Sans", sans-serif; }
.status div { border-left: 1px solid #888; border-top: 1px solid #888; background: #ff0; padding-left: 2px; white-space: nowrap; overflow: hidden; }
.status .mid { display: flex; justify-content: center; gap: 11px; }
.status .elev { padding-left: 8px; }
```
